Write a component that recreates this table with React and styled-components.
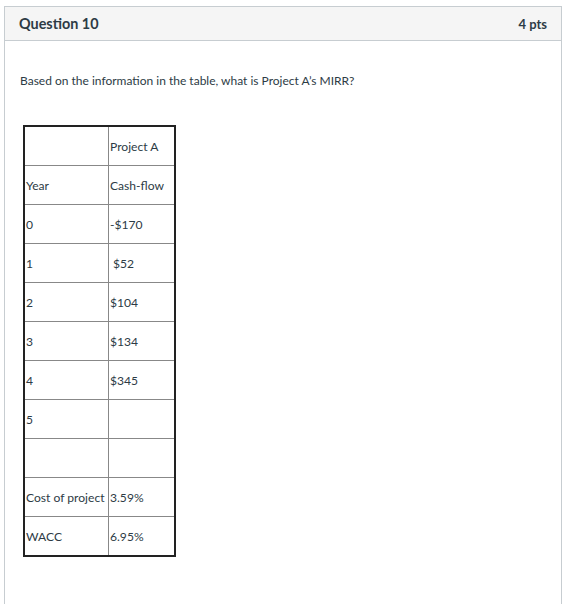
import React from 'react';
import styled, { createGlobalStyle } from 'styled-components';

const GlobalStyle = createGlobalStyle`
  body {
    margin: 0;
    background: #fff;
    font-family: Lato, "Liberation Sans", sans-serif;
    color: #2d3b45;
  }
`;

const Page = styled.div`
  padding: 6px 1px 0 4px;
  height: 598px;
  overflow: hidden;
`;

const Card = styled.div`
  border: 1px solid #c7cdd1;
  border-bottom: none;
  height: 620px;
`;

const Header = styled.div`
  display: flex;
  justify-content: space-between;
  align-items: center;
  height: 33px;
  padding: 0 14px 0 14px;
  background: #f5f5f5;
  border-bottom: 1px solid #c7cdd1;
`;

const Title = styled.h2`
  margin: 0;
  font-size: 14.4px;
  font-weight: 700;
  color: #2d3b45;
`;

const Points = styled.span`
  font-size: 13px;
  font-weight: 700;
  color: #2d3b45;
`;

const Body = styled.div`
  padding: 32px 15px;
`;

const Prompt = styled.p`
  margin: 0 0 36px;
  font-size: 12px;
  line-height: 16px;
`;

const Table = styled.table`
  margin-left: 3px;
  border-collapse: collapse;
  border: 2px solid #222;
  font-size: 12.1px;
`;

const Cell = styled.td`
  border: 1px solid #888;
  height: 38px;
  padding: 0 1px;
  width: ${(p) => p.$w}px;
  vertical-align: middle;
  white-space: pre;
`;

const rows = [
  ['', 'Project A'],
  ['Year', 'Cash-flow'],
  ['0', '-$170'],
  ['1', ' $52'],
  ['2', '$104'],
  ['3', '$134'],
  ['4', '$345'],
  ['5', ''],
  ['', ''],
  ['Cost of project', '3.59%'],
  ['WACC', '6.95%'],
];

export default function App() {
  return (
    <>
      <GlobalStyle />
      <Page>
        <Card>
          <Header>
            <Title>Question 10</Title>
            <Points>4 pts</Points>
          </Header>
          <Body>
            <Prompt>Based on the information in the table, what is Project A’s MIRR?</Prompt>
            <Table>
              <tbody>
                {rows.map((r, i) => (
                  <tr key={i}>
                    <Cell $w={81}>{r[0]}</Cell>
                    <Cell $w={63}>{r[1]}</Cell>
                  </tr>
                ))}
              </tbody>
            </Table>
          </Body>
        </Card>
      </Page>
    </>
  );
}
